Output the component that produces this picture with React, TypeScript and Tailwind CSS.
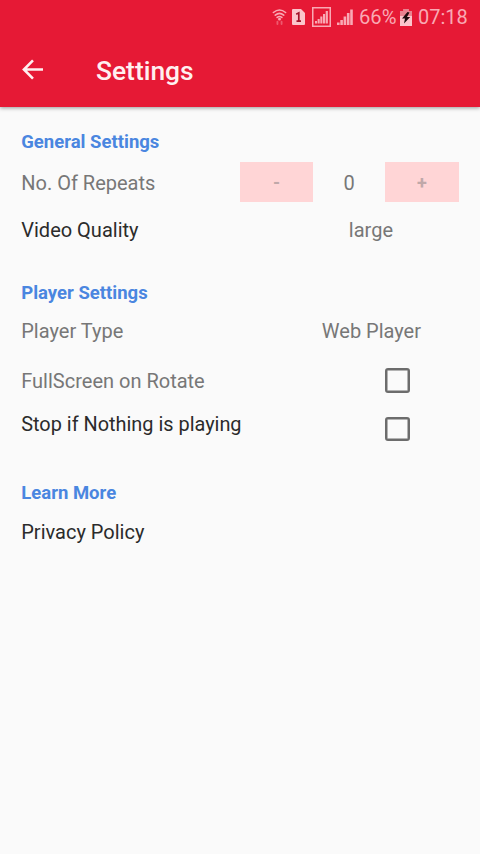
import type { ReactNode } from "react";
import clsx from "clsx";

function StatusBar() {
  return (
    <div className="flex h-[34px] items-center pl-[272px] text-[#f9a9b4]">
      {/* Wifi */}
      <svg className="h-[18px] w-[15px]" viewBox="0 0 16 18" fill="none" stroke="currentColor" strokeWidth={1.7} strokeLinecap="round">
        <path d="M1.5 4.2Q8-1.2 14.5 4.2M3.5 7Q8 3.2 12.5 7M5.5 9.5Q8 7.4 10.5 9.5" />
        <circle cx="8" cy="11.3" r="0.7" fill="currentColor" />
        <path d="M5.8 14v2.5M10.2 14v2.5" strokeWidth={2} opacity={0.45} />
      </svg>

      {/* Sim card */}
      <svg className="ml-[5px] h-4 w-[13px]" viewBox="0 0 13 16">
        <path d="M1 0h8l4 4v11a1 1 0 0 1-1 1H1a1 1 0 0 1-1-1V1a1 1 0 0 1 1-1z" fill="#fbc5cc" />
        <path d="M4.2 5.2L6.8 3.8V12M4.5 12.2h4.5" fill="none" stroke="#a3132a" strokeWidth={1.7} />
      </svg>

      {/* Signal bars, first one is boxed */}
      <svg className="ml-[7px] h-5 w-[19px]" viewBox="0 0 19 20">
        <rect x="0.75" y="0.75" width="17.5" height="18.5" fill="none" stroke="currentColor" strokeWidth={1.5} />
        <path d="M3 14h2v2.5H3zM5.6 12h2.1v4.5H5.6zM8.3 9.5h2.1v7H8.3zM11 7h2.1v9.5H11zM13.7 4h2.2v12.5h-2.2z" fill="currentColor" />
      </svg>
      <svg className="ml-[6px] h-4 w-4" viewBox="0 0 16 16">
        <path d="M0 13.5h2.6V16H0zM3.3 11h2.6v5H3.3zM6.6 7.5h2.6V16H6.6zM9.9 4h2.6v12H9.9zM13.2 0.5h2.6V16h-2.6z" fill="currentColor" />
      </svg>

      <span className="ml-[6px] w-[38px] text-[20.2px] whitespace-nowrap">66%</span>

      {/* Battery */}
      <svg className="ml-[3px] h-[17px] w-3" viewBox="0 0 12 17">
        <path d="M3.5 0h5v2H12v15H0V2h3.5z" fill="#fbc5cc" />
        <path d="M0 2h3.5V0h5v2H12v5H0z" fill="#e98390" />
        <path d="M7.5 3L2 9.5h3L4 14.5 10.2 8H7l2.5-4.5z" fill="#1c0b0d" />
      </svg>

      <span className="ml-[6px] text-[20px] whitespace-nowrap">07:18</span>
    </div>
  );
}

function SectionTitle({ children, className }: { children: ReactNode; className?: string }) {
  return <h2 className={clsx("text-[18.5px] leading-6 font-bold text-[#4a86e0]", className)}>{children}</h2>;
}

function CheckBox({ className }: { className?: string }) {
  return (
    <button
      type="button"
      role="checkbox"
      aria-checked="false"
      className={clsx("mr-[49px] h-6 w-[25px] rounded-[3px] border-2 border-[#6c6c6c] shadow-[inset_0_0_0_0.5px_#6c6c6c]", className)}
    />
  );
}

export default function App() {
  return (
    <div className="min-h-screen w-full bg-[#fafafa] font-[Roboto,sans-serif] text-[20px] leading-6 text-[#777]">
      {/* Header */}
      <header className="h-[107px] bg-[#e61935] shadow-[0_1px_4px_rgba(0,0,0,0.4)]">
        <StatusBar />
        <div className="flex h-[73px] items-center pl-[22px]">
          <svg className="mb-[3px] h-[21px] w-[21px]" viewBox="0 0 22 22" fill="none" stroke="#fff0f0" strokeWidth={2.7}>
            <path d="M22 11H2M11.5 1.5L2 11l9.5 9.5" />
          </svg>
          <h1 className="ml-[53px] text-[26.4px] leading-8 font-medium text-[#fff0f0]">Settings</h1>
        </div>
      </header>

      <main className="pt-[23px] pr-[21px] pl-[21.25px]">
        <SectionTitle>General Settings</SectionTitle>
        <div className="mt-2 flex h-10 items-center">
          <span className="flex-1 pt-px">No. Of Repeats</span>
          <button type="button" className="h-10 w-[73px] bg-[#ffd5d6] pt-0.5 text-[18px] font-bold text-[#c0a8a9]">-</button>
          <span className="w-[72px] pt-px text-center">0</span>
          <button type="button" className="h-10 w-[74px] bg-[#ffd5d6] pt-0.5 text-[18px] font-bold text-[#c0a8a9]">+</button>
        </div>
        <div className="mt-4 flex justify-between">
          <span className="text-[#2b2b2b]">Video Quality</span>
          <span className="mr-[66px]">large</span>
        </div>

        <SectionTitle className="mt-[39px]">Player Settings</SectionTitle>
        <div className="mt-3.5 flex justify-between">
          <span>Player Type</span>
          <span className="mr-[38px]">Web Player</span>
        </div>
        <div className="mt-[25px] flex justify-between">
          <span className="pt-px">FullScreen on Rotate</span>
          <CheckBox className="h-[25px]" />
        </div>
        <div className="mt-[19px] flex items-start justify-between">
          <span className="pt-px text-[19.9px] text-[#2b2b2b]">Stop if Nothing is playing</span>
          <CheckBox className="mt-[5px]" />
        </div>

        <SectionTitle className="mt-10">Learn More</SectionTitle>
        <a className="mt-[15px] block text-[#2b2b2b]">Privacy Policy</a>
      </main>
    </div>
  );
}
